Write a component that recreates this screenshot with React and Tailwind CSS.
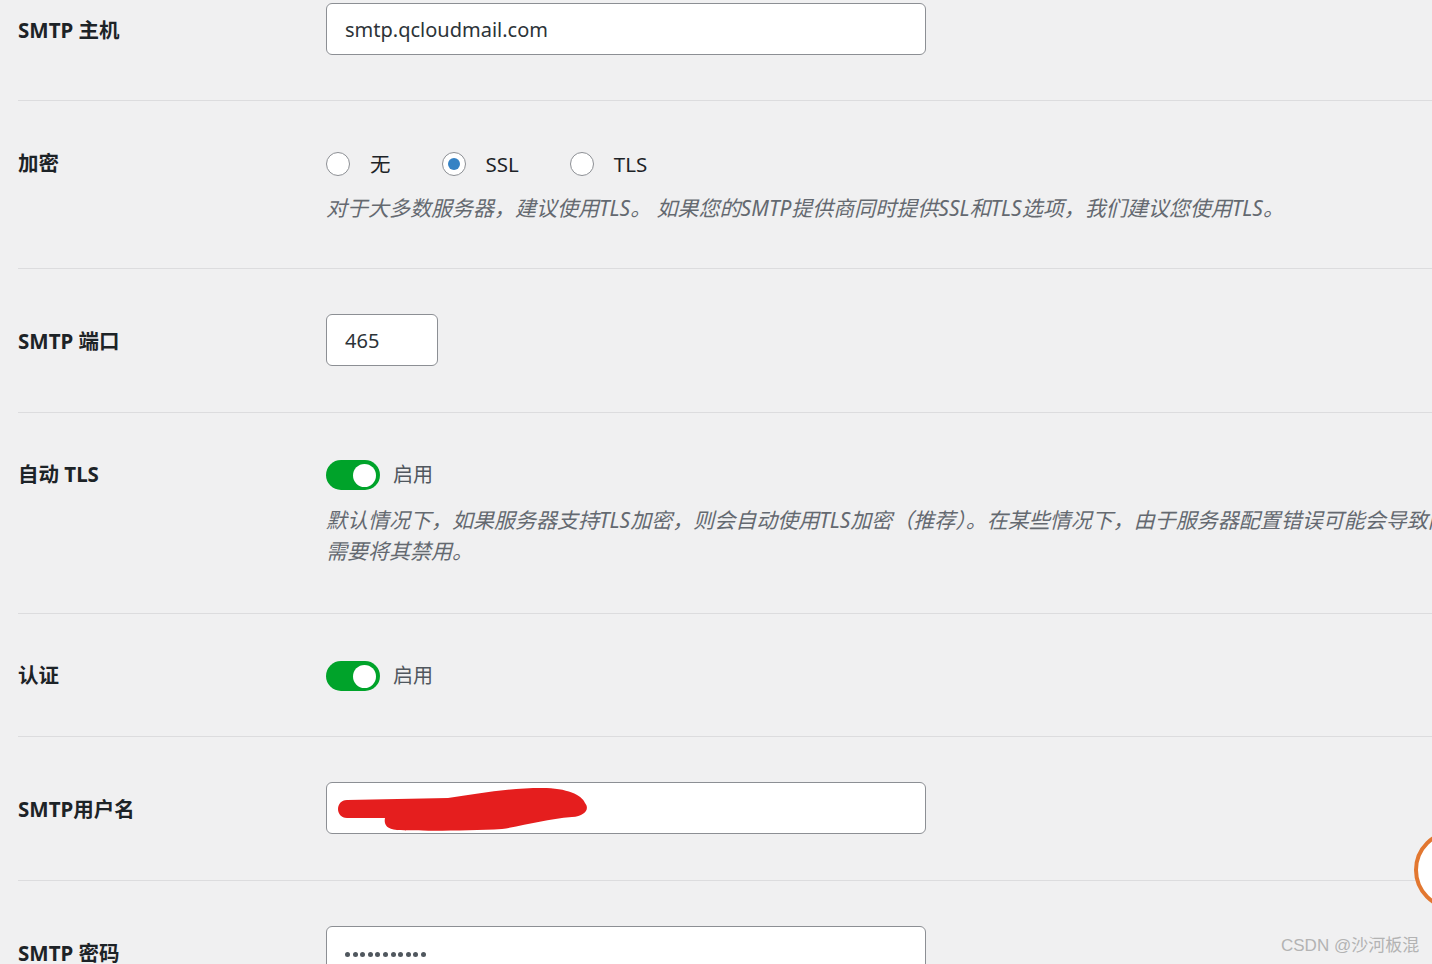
import React from 'react';

const Row = ({ label, pt, pb, h, children, last }) => (
    <div className={`ml-[18px] flex ${last ? '' : 'border-b border-[#dcdcde]'}`} style={{ paddingTop: pt, paddingBottom: pb }}>
        <div className="w-[308px] flex-none flex items-center pt-[3px] text-[20.5px] font-bold text-[#1d2327]" style={{ height: h }}>
            {label}
        </div>
        <div className="flex-1 min-w-0">{children}</div>
    </div>
);

const TextInput = ({ value, className = 'w-[600px]', children }) => (
    <div className={`relative h-[52px] bg-white border border-[#8c8f94] rounded-[6px] flex items-center pt-[2px] px-[18px] text-[20px] text-[#2c3338] ${className}`}>
        {value}
        {children}
    </div>
);

const Radio = ({ checked, label }) => (
    <div className="flex items-center">
        <span className="w-[24px] h-[24px] rounded-full bg-white border border-[#8c8f94] flex items-center justify-center">
            {checked && <span className="w-[12px] h-[12px] rounded-full bg-[#3582c4]" />}
        </span>
        <span className="ml-[20px] text-[20.5px] text-[#1d2327]">{label}</span>
    </div>
);

const Toggle = () => (
    <div className="flex items-center h-[30px]">
        <span className="w-[54px] h-[30px] rounded-full bg-[#00a32a] flex items-center justify-end pr-[4px]">
            <span className="w-[23px] h-[23px] rounded-full bg-white" />
        </span>
        <span className="ml-[13px] text-[20px] text-[#50575e]">启用</span>
    </div>
);

const Desc = ({ children }) => (
    <p className="text-[21px] leading-[31px] italic text-[#646970] whitespace-nowrap">{children}</p>
);

export default function App() {
    return (
        <div className="relative w-full h-[964px] overflow-hidden bg-[#f0f0f1] font-['Noto_Sans','Noto_Sans_CJK_SC',sans-serif]">
            <Row label="SMTP 主机" pt={3} pb={45} h={52}>
                <TextInput value="smtp.qcloudmail.com" />
            </Row>

            <Row label="加密" pt={48} pb={44} h={26}>
                <div className="flex items-center gap-[51px] h-[30px]">
                    <Radio label="无" />
                    <Radio checked label="SSL" />
                    <Radio label="TLS" />
                </div>
                <div className="mt-[14px]">
                    <Desc>对于大多数服务器，建议使用TLS。 如果您的SMTP提供商同时提供SSL和TLS选项，我们建议您使用TLS。</Desc>
                </div>
            </Row>

            <Row label="SMTP 端口" pt={45} pb={46} h={52}>
                <TextInput value="465" className="w-[112px]" />
            </Row>

            <Row label="自动 TLS" pt={47} pb={46} h={26}>
                <Toggle />
                <div className="mt-[15px]">
                    <Desc>默认情况下，如果服务器支持TLS加密，则会自动使用TLS加密（推荐）。在某些情况下，由于服务器配置错误可能会导致问题，因此</Desc>
                    <Desc>需要将其禁用。</Desc>
                </div>
            </Row>

            <Row label="认证" pt={47} pb={45} h={26}>
                <Toggle />
            </Row>

            <Row label="SMTP用户名" pt={45} pb={46} h={52}>
                <TextInput value="">
                    <svg className="absolute left-0 top-0" width="600" height="52" viewBox="0 0 600 52">
                        <path
                            d="M20 17 L121 15 C150 11 180 5 215 5 C240 5 255 12 258 20 C263 26 258 33 245 34 C220 36 200 42 175 46 C140 48 90 48 70 47 C58 46 57 40 58 35 L20 35 C8 35 8 17 20 17 Z"
                            fill="#e51e1e"
                        />
                    </svg>
                </TextInput>
            </Row>

            <Row label="SMTP 密码" pt={45} pb={0} h={52} last>
                <TextInput value="">
                    <div className="flex items-center gap-[2.6px] mt-[2px]">
                        {Array.from({ length: 11 }).map((_, i) => (
                            <span key={i} className="w-[5px] h-[5px] rounded-full bg-[#50575e]" />
                        ))}
                    </div>
                </TextInput>
            </Row>

            <div className="absolute left-[1414px] top-[830px] w-[80px] h-[80px] rounded-full bg-white border-[4px] border-[#e27730]" />

            <div className="absolute left-[1281px] top-[933px] text-[17px] text-[#b3b3b3] font-['Liberation_Sans','Noto_Sans_CJK_SC',sans-serif]">
                CSDN @沙河板混
            </div>
        </div>
    );
}
